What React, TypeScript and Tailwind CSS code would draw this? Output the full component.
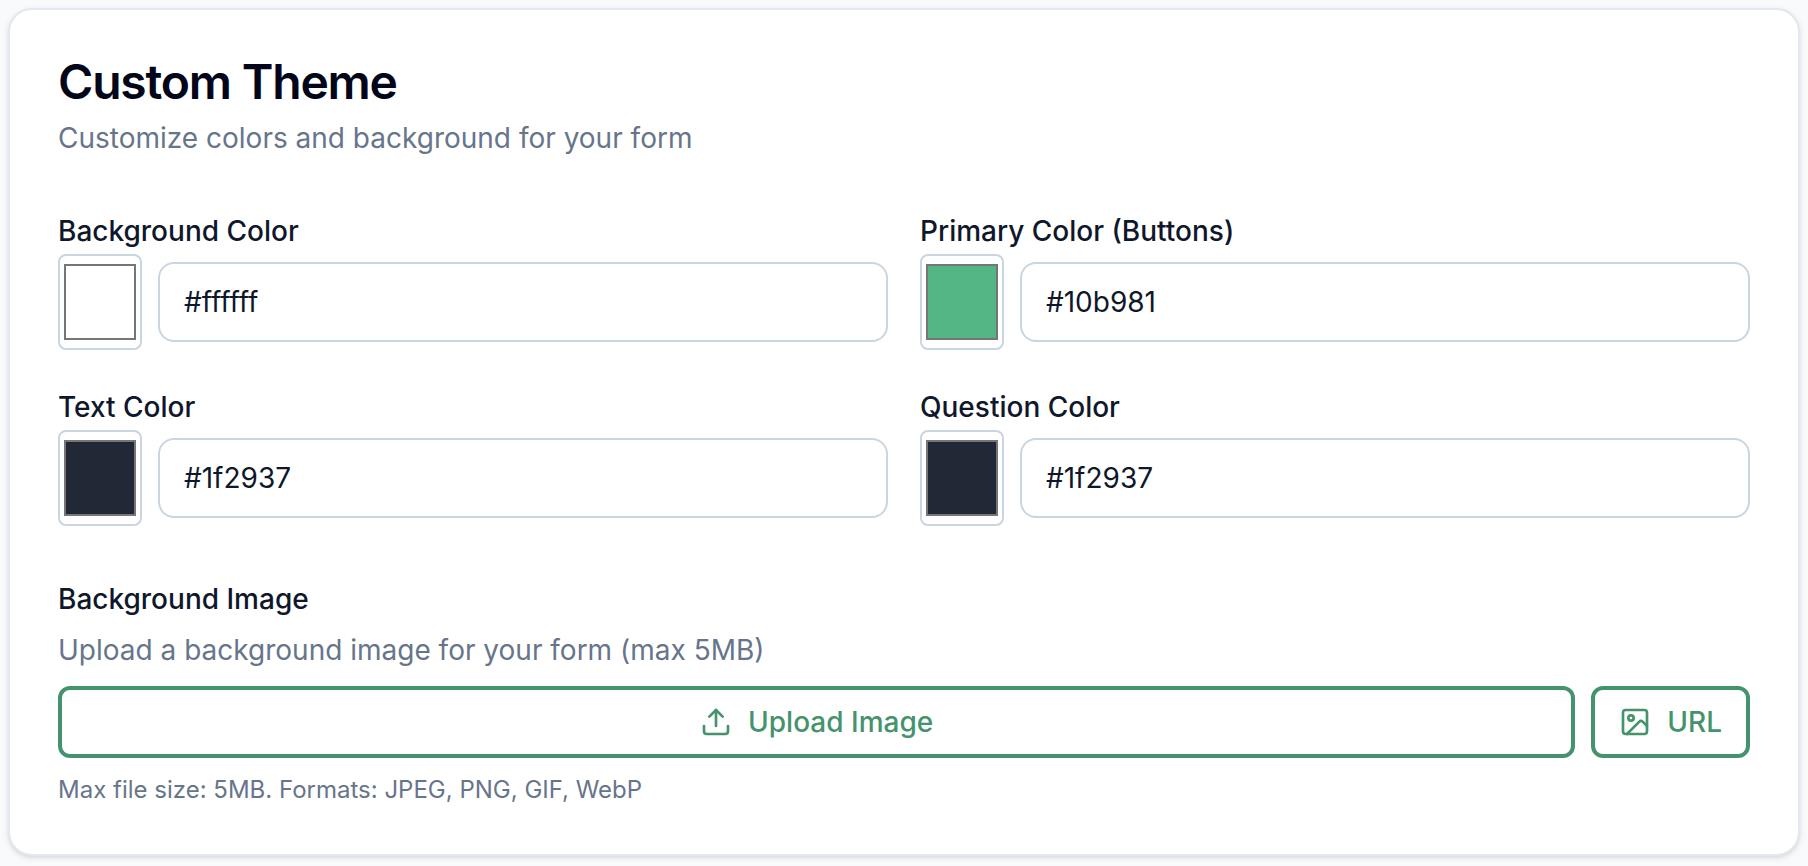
import { useState } from "react";
import { Image, Upload } from "lucide-react";

interface ColorFieldProps {
    id: string;
    label: string;
    swatch: string;
    initial: string;
}

const ColorField = ({ id, label, swatch, initial }: ColorFieldProps) => {
    const [picked, setPicked] = useState(swatch);
    const [text, setText] = useState(initial);

    const handlePick = (value: string) => {
        setPicked(value);
        setText(value);
    };

    return (
        <div className="flex flex-col">
            <label htmlFor={id} className="pt-0.5 text-[28px] leading-[46px] font-medium text-slate-900">
                {label}
            </label>
            <div className="flex items-center gap-4">
                <input
                    type="color"
                    aria-label={`${label} picker`}
                    value={picked}
                    onChange={(e) => handlePick(e.target.value)}
                    className="h-24 w-21 shrink-0 cursor-pointer rounded-lg border-2 border-slate-300 bg-white px-1 py-2 [&::-webkit-color-swatch-wrapper]:p-0 [&::-webkit-color-swatch]:rounded-none [&::-webkit-color-swatch]:border-2 [&::-webkit-color-swatch]:border-[#767676]"
                />
                <input
                    id={id}
                    type="text"
                    value={text}
                    onChange={(e) => setText(e.target.value)}
                    className="h-20 min-w-0 flex-1 rounded-2xl border-2 border-slate-300 bg-white px-6 text-[28px] text-slate-900"
                />
            </div>
        </div>
    );
};

const fields: ColorFieldProps[] = [
    { id: "background", label: "Background Color", swatch: "#ffffff", initial: "#ffffff" },
    { id: "primary", label: "Primary Color (Buttons)", swatch: "#55b685", initial: "#10b981" },
    { id: "text", label: "Text Color", swatch: "#222936", initial: "#1f2937" },
    { id: "question", label: "Question Color", swatch: "#222936", initial: "#1f2937" },
];

const App = () => {
    return (
        <main className="min-h-screen bg-slate-50 p-2 font-[Inter,sans-serif]">
            <section className="rounded-3xl border-2 border-slate-200 bg-white p-12 shadow-[0_2px_6px_rgba(0,0,0,0.1),0_2px_4px_-2px_rgba(0,0,0,0.1)]">
                <h3 className="text-5xl leading-12 font-semibold tracking-tight text-slate-950">Custom Theme</h3>
                <p className="mt-3 text-[28px] leading-10 text-[#67758b]">
                    Customize colors and background for your form
                </p>

                <div className="mt-12 grid grid-cols-2 gap-8">
                    {fields.map((field) => (
                        <ColorField key={field.id} {...field} />
                    ))}
                </div>

                <div className="mt-12">
                    <h4 className="pt-0.5 text-[28px] leading-[46px] font-medium text-slate-900">Background Image</h4>
                    <p className="mt-2 text-[28px] leading-10 text-[#67758b]">
                        Upload a background image for your form (max 5MB)
                    </p>
                    <div className="mt-4 flex gap-4">
                        <button
                            type="button"
                            className="flex h-18 flex-1 items-center justify-center gap-4 rounded-xl border-4 border-[#45936d] px-6 text-[28px] font-medium text-[#45936d]"
                        >
                            <Upload className="size-8" />
                            Upload Image
                        </button>
                        <button
                            type="button"
                            className="flex h-18 items-center justify-center gap-4 rounded-xl border-4 border-[#45936d] px-6 text-[28px] font-medium text-[#45936d]"
                        >
                            <Image className="size-8" />
                            URL
                        </button>
                    </div>
                    <p className="mt-4 text-2xl leading-8 text-[#67758b]">
                        Max file size: 5MB. Formats: JPEG, PNG, GIF, WebP
                    </p>
                </div>
            </section>
        </main>
    );
};

export default App;
